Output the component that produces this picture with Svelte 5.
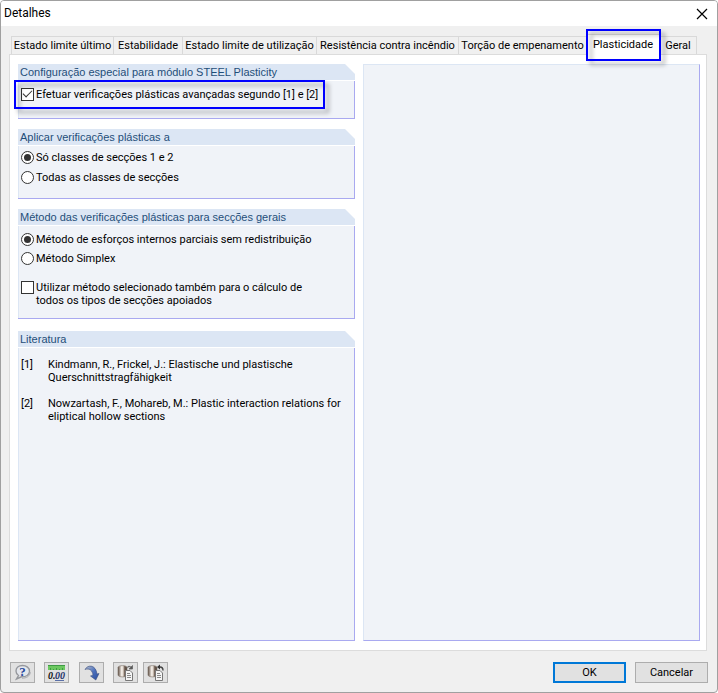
<script lang="ts">
	const tabs = [
		'Estado limite último',
		'Estabilidade',
		'Estado limite de utilização',
		'Resistência contra incêndio',
		'Torção de empenamento',
		'Plasticidade',
		'Geral'
	];

	const literature = [
		'Kindmann, R., Frickel, J.: Elastische und plastische Querschnittstragfähigkeit',
		'Nowzartash, F., Mohareb, M.: Plastic interaction relations for eliptical hollow sections'
	];

	let activeTab = $state('Plasticidade');
	let advanced = $state(true);
	let classes = $state('12');
	let method = $state('partial');
	let supported = $state(false);
</script>

<div class="window">
	<header class="titlebar">
		<h1>Detalhes</h1>
		<button class="close" aria-label="Fechar">
			<svg width="12" height="12" viewBox="0 0 12 12">
				<path d="M1 1L11 11M11 1L1 11" stroke="#000" stroke-width="1.2" />
			</svg>
		</button>
	</header>

	<div class="tabs" role="tablist">
		{#each tabs as tab}
			<button
				role="tab"
				class="tab"
				class:active={tab === activeTab}
				aria-selected={tab === activeTab}
				onclick={() => (activeTab = tab)}>{tab}</button
			>
		{/each}
	</div>

	<main class="page">
		<div class="column">
			<section class="group plasticity">
				<h2>Configuração especial para módulo STEEL Plasticity</h2>
				<div class="body">
					<label class="option marked">
						<input type="checkbox" bind:checked={advanced} />
						<span>Efetuar verificações plásticas avançadas segundo [1] e [2]</span>
					</label>
				</div>
			</section>

			<section class="group classes">
				<h2>Aplicar verificações plásticas a</h2>
				<div class="body">
					<label class="option">
						<input type="radio" value="12" bind:group={classes} />
						<span>Só classes de secções 1 e 2</span>
					</label>
					<label class="option">
						<input type="radio" value="all" bind:group={classes} />
						<span>Todas as classes de secções</span>
					</label>
				</div>
			</section>

			<section class="group method">
				<h2>Método das verificações plásticas para secções gerais</h2>
				<div class="body">
					<label class="option">
						<input type="radio" value="partial" bind:group={method} />
						<span>Método de esforços internos parciais sem redistribuição</span>
					</label>
					<label class="option">
						<input type="radio" value="simplex" bind:group={method} />
						<span>Método Simplex</span>
					</label>
					<label class="option spaced">
						<input type="checkbox" bind:checked={supported} />
						<span>Utilizar método selecionado também para o cálculo de<br />todos os tipos de secções apoiados</span>
					</label>
				</div>
			</section>

			<section class="group literature">
				<h2>Literatura</h2>
				<ol class="body">
					{#each literature as entry, i}
						<li><span>[{i + 1}]</span><span>{entry}</span></li>
					{/each}
				</ol>
			</section>
		</div>
		<div class="preview"></div>
	</main>

	<footer class="footer">
		<button class="tool" aria-label="Ajuda">
			<svg width="19" height="17" viewBox="0 0 19 17">
				<path d="M9.500 1.500C5.500 1.500 3 4 3 7c0 2 1 3.600 2.500 4.500L3.500 15l5-2.200C13 13 16.500 11 16.500 7.200 16.500 4 13.500 1.500 9.500 1.500z" fill="#e3e6ec" stroke="#96989d" stroke-width="1.400" />
				<path d="M9 14.200c4.500 0 8-2 8.300-6" fill="none" stroke="#a6a8ad" />
				<text x="9.500" y="12" text-anchor="middle" font-family="Liberation Serif, serif" font-size="13" font-weight="bold" fill="#27469c">?</text>
			</svg>
		</button>
		<button class="tool units" aria-label="Unidades e casas decimais">
			<svg width="19" height="17" viewBox="0 0 19 17">
				<rect x="1" y="1" width="17" height="5" fill="#6cc860" />
				<path d="M1 1.500h17" stroke="#3f9a45" />
				<path d="M3.500 4v2M6.500 5v1M9.500 4v2M12.500 5v1M15.500 4v2" stroke="#3f9a45" />
				<text x="1" y="15" font-family="Liberation Serif, serif" font-size="10" font-style="italic" font-weight="bold" fill="#111">0.</text>
				<text x="8" y="15" font-family="Liberation Serif, serif" font-size="10" font-style="italic" font-weight="bold" fill="#1d3268">00</text>
				<path d="M8 16.500h9" stroke="#5a70a8" />
			</svg>
		</button>
		<button class="tool" aria-label="Padrão">
			<svg width="19" height="17" viewBox="0 0 19 17">
				<defs>
					<linearGradient id="arrow" x1="0" y1="0" x2="1" y2="1">
						<stop offset="0" stop-color="#b9bfcc" />
						<stop offset=".5" stop-color="#4b70bd" />
						<stop offset="1" stop-color="#274a9a" />
					</linearGradient>
				</defs>
				<path d="M3 5.500C6 0 14 1 15 10l2-.5-3.200 6.500L8.500 12l2.500-.8C10.500 6.500 7.500 4 3 5.500z" fill="url(#arrow)" stroke="#3a4f80" stroke-width=".6" />
			</svg>
		</button>
		{#each ['Carregar', 'Guardar'] as label, i}
			<button class="tool" class:save={i === 1} aria-label={label}>
				<svg width="19" height="17" viewBox="0 0 19 17">
					<defs>
						<linearGradient id="cylinder{i}">
							<stop offset="0" stop-color="#5d4d42" />
							<stop offset=".4" stop-color="#f4efe9" />
							<stop offset=".55" stop-color="#e6ddd4" />
							<stop offset=".75" stop-color="#6b5a4e" />
							<stop offset="1" stop-color="#4f433b" />
						</linearGradient>
					</defs>
					<path d="M2 3.500c0-2.500 9-2.500 9 0v7.500c0 2.500-9 2.500-9 0z" fill="url(#cylinder{i})" stroke="#7a6e65" stroke-width=".6" />
					<path d="M9.500 6.500h4.500l2.500 2.500v7.500h-7z" fill="#f4f4f4" stroke="#777" />
					<path d="M11 9.500h3M11 11.500h4M11 13.500h4" stroke="#888" />
					{#if i === 0}
						<path d="M11 3.500c1-1.500 2.500-1.500 4-.5M16.500 1.500v3.500h-3.500z" fill="#555" stroke="#666" stroke-width=".8" />
					{:else}
						<path d="M14 3c2 0 3 1 3 3.500" fill="none" stroke="#444" stroke-width="1.400" />
						<path d="M14 .5v5L11 3z" fill="#333" />
					{/if}
				</svg>
			</button>
		{/each}
		<span class="grow"></span>
		<button class="action primary">OK</button>
		<button class="action">Cancelar</button>
	</footer>
</div>

<style>
	:global(body) {
		background: #fff;
	}

	.window {
		display: flex;
		flex-direction: column;
		box-sizing: border-box;
		min-height: 100vh;
		overflow: hidden;
		border: 1px solid #a0a0a0;
		border-radius: 4px;
		background: #f0f0f0;
		color: #000;
		font: 11px/13px Roboto, 'DejaVu Sans Condensed', sans-serif;
	}

	button {
		box-sizing: border-box;
		margin: 0;
		padding: 0;
		color: inherit;
		font: inherit;
	}

	.titlebar {
		display: flex;
		align-items: center;
		justify-content: space-between;
		height: 25px;
		padding: 0 9px 0 3px;
		background: #fff;
	}

	h1 {
		margin: 0;
		font-size: 12px;
		font-weight: normal;
	}

	.close {
		display: flex;
		border: 0;
		background: none;
	}

	.tabs {
		display: grid;
		grid-template-columns: 103px 69px 134px 142px 128px 73px 37px;
		align-items: end;
		margin: 8px 10px 0;
		height: 20px;
	}

	.tab {
		height: 18px;
		border: 1px solid #d9d9d9;
		border-width: 1px 1px 0 0;
		background: #f0f0f0;
		white-space: nowrap;
	}

	.tab:first-child {
		border-left-width: 1px;
	}

	.tab.active {
		position: relative;
		z-index: 1;
		height: 21px;
		margin-bottom: -1px;
		padding-bottom: 2px;
		background: #fff;
	}

	/* blue callout frames */
	.tab.active::after,
	.marked::after {
		content: '';
		position: absolute;
		border: 2px solid #00f;
		filter: drop-shadow(4px 4px 2px #0005);
		pointer-events: none;
	}

	.tab.active::after {
		inset: -6px -2px -6px -1px;
	}

	.marked::after {
		inset: -8px -7px -8px -7px;
	}

	.page {
		display: grid;
		grid-template-columns: 1fr 1fr;
		gap: 8px;
		flex: 1;
		margin: 0 10px 0 8px;
		padding: 9px 6px 9px 8px;
		border: 1px solid #dcdcdc;
		background: #fff;
	}

	.column {
		display: flex;
		flex-direction: column;
		gap: 10px;
	}

	.group {
		background: linear-gradient(#a9a9f0, #a9a9f0) right bottom / 1px calc(100% - 10px) no-repeat;
		border-bottom: 1px solid #a9a9f0;
	}

	h2 {
		height: 16px;
		margin: 0;
		padding-left: 2px;
		border-bottom: 1px solid #fff;
		background: #dce6f4;
		clip-path: polygon(0 0, calc(100% - 10px) 0, 100% 10px, 100% 100%, 0 100%);
		color: #1f4e79;
		font: 11px/16px 'Liberation Sans', Arial, sans-serif;
	}

	.body {
		margin: 0 1px 0 0;
		padding: 7px 2px 11px;
		border-left: 1px solid #dce6f4;
		background: #f0f3f8;
	}

	.plasticity .body {
		padding-bottom: 17px;
	}

	.classes .body {
		padding-top: 5px;
		padding-bottom: 14px;
	}

	.option {
		position: relative;
		display: flex;
		gap: 2px;
		width: fit-content;
		min-height: 13px;
	}

	.option + .option {
		margin-top: 7px;
	}

	.method .option + .option {
		margin-top: 6px;
	}

	.method .option.spaced {
		margin-top: 16px;
	}

	.method {
		margin-bottom: 2px;
	}

	input {
		appearance: none;
		display: grid;
		place-items: center;
		flex: none;
		box-sizing: border-box;
		width: 13px;
		height: 13px;
		margin: 0;
		border: 1px solid #333;
		background: #fff;
	}

	input[type='radio'] {
		border-radius: 50%;
	}

	input[type='radio']:checked::before {
		content: '';
		width: 7px;
		height: 7px;
		border-radius: 50%;
		background: #333;
	}

	input[type='checkbox']:checked::before {
		content: '';
		width: 9px;
		height: 5px;
		margin-top: -4px;
		box-sizing: border-box;
		border: solid #333;
		border-width: 0 0 1px 1px;
		transform: rotate(-45deg);
	}

	.literature {
		display: flex;
		flex: 1;
		flex-direction: column;
	}

	.literature .body {
		flex: 1;
		padding-top: 10px;
		list-style: none;
	}

	li {
		display: grid;
		grid-template-columns: 27px 1fr;
		margin-bottom: 13px;
	}

	.preview {
		border: 1px solid #dce6f4;
		border-right-color: #a9a9f0;
		border-bottom-color: #a9a9f0;
		background: #f0f3f8;
	}

	.footer {
		display: flex;
		padding: 11px 9px 9px;
	}

	.tool,
	.action {
		height: 21px;
		border: 1px solid #adadad;
		background: #e1e1e1;
	}

	.tool {
		display: grid;
		place-items: center;
		width: 25px;
		margin-right: 9px;
	}

	.units {
		margin-right: 10px;
	}

	.tool:has(+ .save) {
		margin-right: 5px;
	}

	.grow {
		flex: 1;
	}

	.action {
		width: 73px;
	}

	.primary {
		margin-right: 9px;
		border: 2px solid #0078d7;
	}
</style>
